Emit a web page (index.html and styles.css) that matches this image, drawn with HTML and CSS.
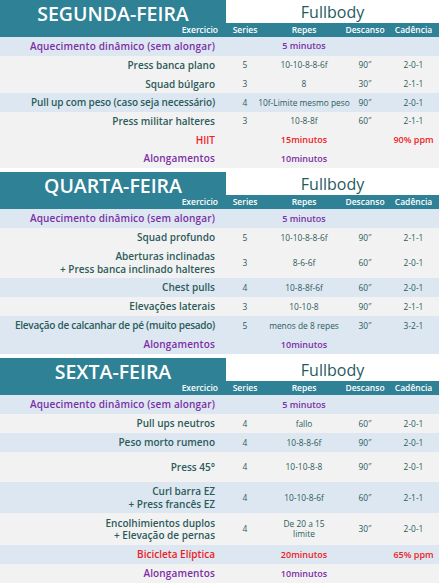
FILE: index.html
```html
<!DOCTYPE html>
<html lang="pt">
<head>
<meta charset="utf-8">
<link rel="stylesheet" href="styles.css">
</head>
<body>
<main class="plan">

<section class="day compact">
  <div class="head"><h2 class="title">SEGUNDA-FEIRA</h2><div class="type">Fullbody</div></div>
  <div class="row labels"><span class="ex">Exercicio</span><span>Series</span><span>Repes</span><span>Descanso</span><span>Cadência</span></div>
  <div class="row blue purple"><span class="ex">Aquecimento dinâmico (sem alongar)</span><span></span><span class="big">5 minutos</span><span></span><span></span></div>
  <div class="row"><span class="ex">Press banca plano</span><span>5</span><span>10-10-8-8-6f</span><span>90″</span><span>2-0-1</span></div>
  <div class="row"><span class="ex">Squad búlgaro</span><span>3</span><span>8</span><span>30″</span><span>2-1-1</span></div>
  <div class="row blue"><span class="ex narrow">Pull up com peso (caso seja necessário)</span><span>4</span><span>10f-Limite mesmo peso</span><span>90″</span><span>2-0-1</span></div>
  <div class="row"><span class="ex">Press militar halteres</span><span>3</span><span>10-8-8f</span><span>60″</span><span>2-1-1</span></div>
  <div class="row red"><span class="ex">HIIT</span><span></span><span class="big">15minutos</span><span></span><span class="big">90% ppm</span></div>
  <div class="row purple"><span class="ex">Alongamentos</span><span></span><span class="big">10minutos</span><span></span><span></span></div>
</section>

<section class="day">
  <div class="head"><h2 class="title">QUARTA-FEIRA</h2><div class="type">Fullbody</div></div>
  <div class="row labels"><span class="ex">Exercicio</span><span>Series</span><span>Repes</span><span>Descanso</span><span>Cadência</span></div>
  <div class="row blue purple"><span class="ex">Aquecimento dinâmico (sem alongar)</span><span></span><span class="big">5 minutos</span><span></span><span></span></div>
  <div class="row"><span class="ex">Squad profundo</span><span>5</span><span>10-10-8-8-6f</span><span>90″</span><span>2-1-1</span></div>
  <div class="row tall"><span class="ex">Aberturas inclinadas<br>+ Press banca inclinado halteres</span><span>3</span><span>8-6-6f</span><span>60″</span><span>2-0-1</span></div>
  <div class="row blue"><span class="ex">Chest pulls</span><span>4</span><span>10-8-8f-6f</span><span>60″</span><span>2-0-1</span></div>
  <div class="row"><span class="ex">Elevações laterais</span><span>3</span><span>10-10-8</span><span>90″</span><span>2-1-1</span></div>
  <div class="row blue"><span class="ex narrower">Elevação de calcanhar de pé (muito pesado)</span><span>5</span><span>menos de 8 repes</span><span>30″</span><span>3-2-1</span></div>
  <div class="row blue purple"><span class="ex">Alongamentos</span><span></span><span class="big">10minutos</span><span></span><span></span></div>
</section>

<section class="day">
  <div class="head"><h2 class="title">SEXTA-FEIRA</h2><div class="type">Fullbody</div></div>
  <div class="row labels"><span class="ex">Exercicio</span><span>Series</span><span>Repes</span><span>Descanso</span><span>Cadência</span></div>
  <div class="row blue purple"><span class="ex">Aquecimento dinâmico (sem alongar)</span><span></span><span class="big">5 minutos</span><span></span><span></span></div>
  <div class="row"><span class="ex">Pull ups neutros</span><span>4</span><span>fallo</span><span>60″</span><span>2-0-1</span></div>
  <div class="row blue"><span class="ex">Peso morto rumeno</span><span>4</span><span>10-8-8-6f</span><span>90″</span><span>2-0-1</span></div>
  <div class="row h30"><span class="ex">Press 45°</span><span>4</span><span>10-10-8-8</span><span>90″</span><span>2-0-1</span></div>
  <div class="row blue tall"><span class="ex">Curl barra EZ<br>+ Press francês EZ</span><span>4</span><span>10-10-8-6f</span><span>60″</span><span>2-1-1</span></div>
  <div class="row h32"><span class="ex">Encolhimientos duplos<br>+ Elevação de pernas</span><span>4</span><span class="wrap">De 20 a 15<br>limite</span><span>30″</span><span>2-0-1</span></div>
  <div class="row blue red"><span class="ex">Bicicleta Elíptica</span><span></span><span class="big">20minutos</span><span></span><span class="big">65% ppm</span></div>
  <div class="row purple"><span class="ex">Alongamentos</span><span></span><span class="big">10minutos</span><span></span><span></span></div>
</section>

</main>
</body>
</html>
```
FILE: styles.css
```css
html, body {
  margin: 0;
  padding: 0;
  background: #ffffff;
}
body {
  font-family: "Open Sans", "Liberation Sans", sans-serif;
  color: #2c5b5a;
}
.plan {
  width: 439px;
}
.day {
  margin-bottom: 4px;
}
.head {
  display: grid;
  grid-template-columns: 226px 1fr;
  height: 23px;
  background: #2f8195;
}
.title {
  margin: 0;
  padding-top: 4px;
  height: 23px;
  box-sizing: border-box;
  font-size: 19.5px;
  line-height: 20px;
  font-weight: 600;
  color: #ffffff;
  text-align: center;
  white-space: nowrap;
}
.type {
  background: #ffffff;
  color: #1f5b5e;
  font-size: 16px;
  font-weight: 500;
  line-height: 22px;
  padding-top: 1px;
  text-align: center;
}
.row {
  display: grid;
  grid-template-columns: 224px 42px 76px 46px 51px;
  height: 19px;
  background: #f2f2f2;
  font-size: 8.4px;
  line-height: 10px;
}
.compact .row {
  height: 18.72px;
}
.row > span {
  display: flex;
  align-items: center;
  justify-content: center;
  white-space: nowrap;
  text-align: center;
}
.row > .ex {
  justify-content: flex-end;
  text-align: right;
  padding-right: 9px;
  font-size: 10px;
  font-weight: 600;
  line-height: 12.5px;
}
.row > .ex.narrow {
  letter-spacing: -0.12px;
}
.row > .ex.narrower {
  letter-spacing: -0.26px;
}
.row.blue {
  background: #dde7f1;
}
.row.tall {
  height: 31px;
}
.row.h30 {
  height: 30px;
}
.row.h32 {
  height: 32px;
}
.row.labels {
  height: 14px;
  background: #2f8195;
  color: #ffffff;
  font-size: 8.5px;
  font-weight: 600;
}
.compact .row.labels {
  height: 14px;
}
.row.labels > .ex {
  font-size: 8.5px;
  padding-right: 6px;
}
.row .big {
  font-size: 9px;
  font-weight: 600;
}
.row .wrap {
  line-height: 10.5px;
}
.row.purple {
  color: #7b2fa5;
}
.row.purple > .ex {
  letter-spacing: 0.15px;
}
.row.red {
  color: #ee1c24;
}
```
